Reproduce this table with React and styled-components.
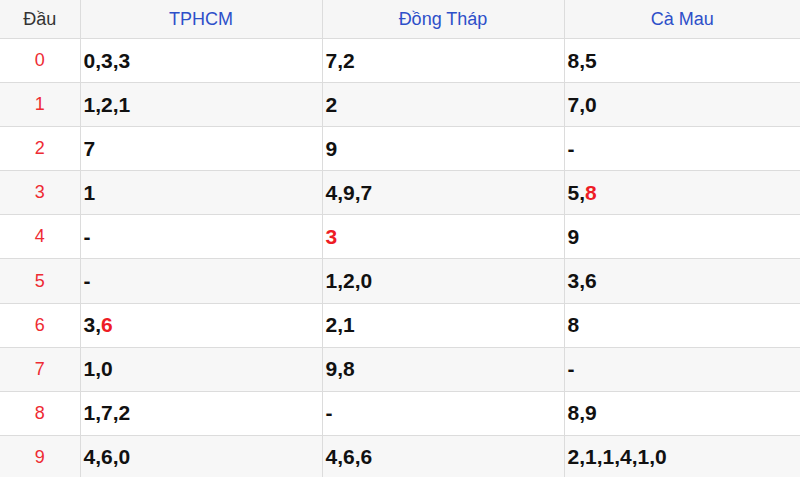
import React from "react";
import styled, { createGlobalStyle } from "styled-components";

const Global = createGlobalStyle`
  html, body { margin: 0; padding: 0; background: #fff; }
  body { font-family: "Liberation Sans", Arial, sans-serif; overflow: hidden; }
`;

const Table = styled.table`
  width: 800px;
  border-collapse: collapse;
  table-layout: fixed;
`;

const HeadCell = styled.th`
  height: 38px;
  padding: 0;
  background: #f6f6f6;
  border: 1px solid #dcdcdc;
  border-top: none;
  font-weight: normal;
  font-size: 18px;
  text-align: center;
  vertical-align: middle;
  color: ${(p) => (p.$first ? "#333" : "#2d4fc9")};
  &:first-child { border-left: none; }
  &:last-child { border-right: none; }
`;

const Row = styled.tr`
  background: ${(p) => (p.$alt ? "#f7f7f7" : "#fff")};
`;

const HeadNum = styled.td`
  height: 43.1px;
  padding: 0;
  border: 1px solid #dcdcdc;
  border-left: none;
  text-align: center;
  color: #ee2b33;
  font-size: 18px;
`;

const Cell = styled.td`
  height: 43.1px;
  padding: 0 0 0 3px;
  border: 1px solid #dcdcdc;
  font-size: 21px;
  font-weight: bold;
  color: #111;
  &:last-child { border-right: none; }
`;

const Red = styled.span`
  color: #ee1c25;
`;

const data = [
  ["0,3,3", "7,2", "8,5"],
  ["1,2,1", "2", "7,0"],
  ["7", "9", "-"],
  ["1", "4,9,7", ["5,", "8"]],
  ["-", ["", "3"], "9"],
  ["-", "1,2,0", "3,6"],
  [["3,", "6"], "2,1", "8"],
  ["1,0", "9,8", "-"],
  ["1,7,2", "-", "8,9"],
  ["4,6,0", "4,6,6", "2,1,1,4,1,0"],
];

const renderVal = (v) =>
  Array.isArray(v) ? (
    <>
      {v[0]}
      <Red>{v[1]}</Red>
    </>
  ) : (
    v
  );

export default function App() {
  return (
    <>
      <Global />
      <Table>
        <colgroup>
          <col style={{ width: 80 }} />
          <col style={{ width: 242 }} />
          <col style={{ width: 242 }} />
          <col />
        </colgroup>
        <thead>
          <tr>
            <HeadCell $first>Đầu</HeadCell>
            <HeadCell>TPHCM</HeadCell>
            <HeadCell>Đồng Tháp</HeadCell>
            <HeadCell>Cà Mau</HeadCell>
          </tr>
        </thead>
        <tbody>
          {data.map((r, i) => (
            <Row key={i} $alt={i % 2 === 1}>
              <HeadNum>{i}</HeadNum>
              {r.map((v, j) => (
                <Cell key={j}>{renderVal(v)}</Cell>
              ))}
            </Row>
          ))}
        </tbody>
      </Table>
    </>
  );
}
